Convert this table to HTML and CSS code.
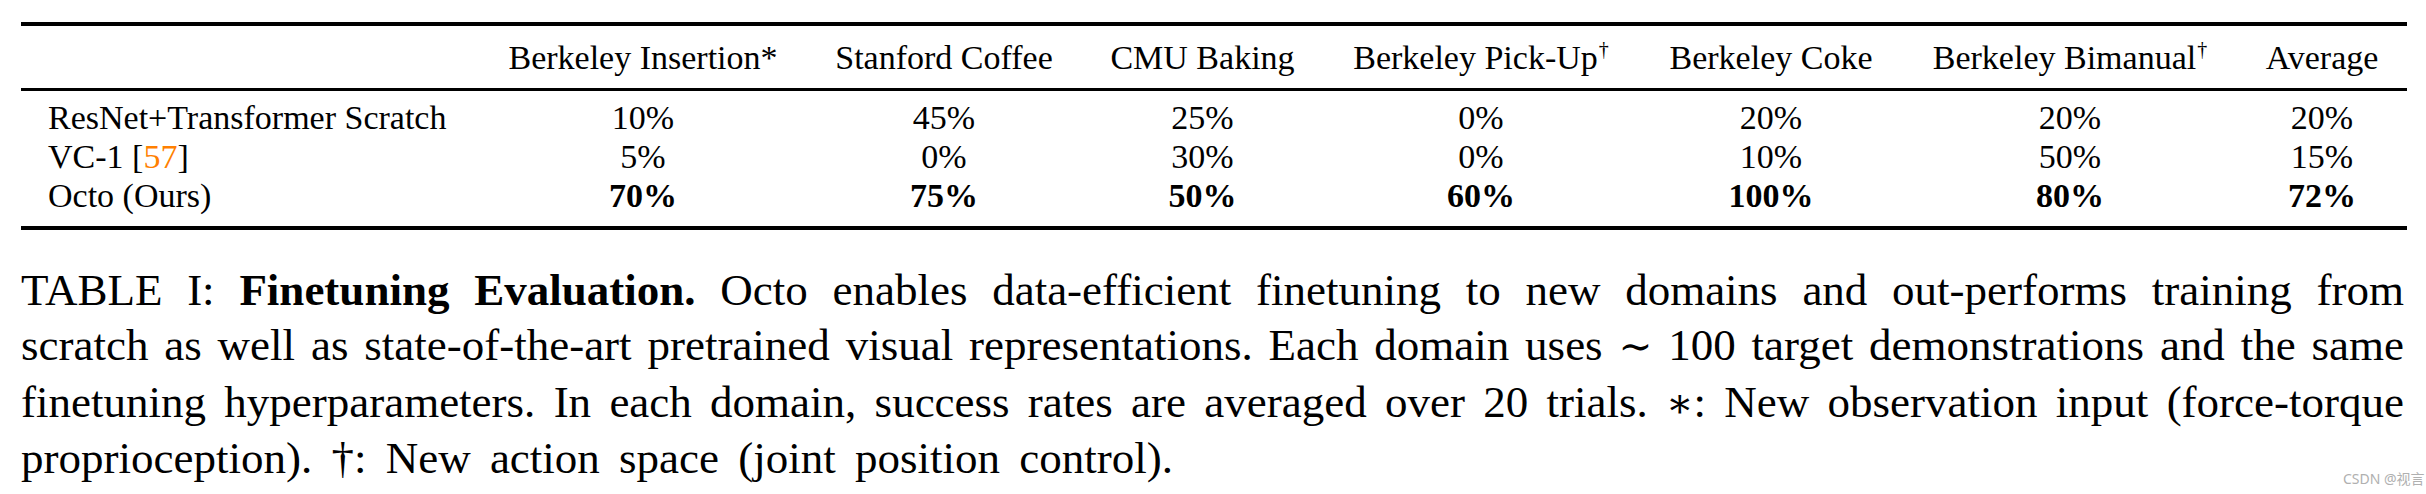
FILE: index.html
```html
<!DOCTYPE html>
<html lang="en">
<head>
<meta charset="utf-8">
<title>TABLE I: Finetuning Evaluation</title>
<link rel="stylesheet" href="styles.css">
</head>
<body>
<div class="page">
  <table class="results">
    <colgroup>
      <col class="c0"><col class="c1"><col class="c2"><col class="c3"><col class="c4"><col class="c5"><col class="c6"><col class="c7">
    </colgroup>
    <thead>
      <tr>
        <th class="label"></th>
        <th>Berkeley Insertion*</th>
        <th>Stanford Coffee</th>
        <th>CMU Baking</th>
        <th>Berkeley Pick-Up<span class="dag">†</span></th>
        <th>Berkeley Coke</th>
        <th>Berkeley Bimanual<span class="dag">†</span></th>
        <th>Average</th>
      </tr>
    </thead>
    <tbody>
      <tr>
        <td class="label">ResNet+Transformer Scratch</td>
        <td>10%</td><td>45%</td><td>25%</td><td>0%</td><td>20%</td><td>20%</td><td>20%</td>
      </tr>
      <tr>
        <td class="label">VC-1 [<span class="cite">57</span>]</td>
        <td>5%</td><td>0%</td><td>30%</td><td>0%</td><td>10%</td><td>50%</td><td>15%</td>
      </tr>
      <tr class="best">
        <td class="label">Octo (Ours)</td>
        <td>70%</td><td>75%</td><td>50%</td><td>60%</td><td>100%</td><td>80%</td><td>72%</td>
      </tr>
    </tbody>
  </table>
  <p class="caption">
    <span class="line">TABLE I: <b>Finetuning Evaluation.</b> Octo enables data-efficient finetuning to new domains and out-performs training from</span>
    <span class="line">scratch as well as state-of-the-art pretrained visual representations. Each domain uses <span class="math">∼</span> 100 target demonstrations and the same</span>
    <span class="line">finetuning hyperparameters. In each domain, success rates are averaged over 20 trials. <span class="math">∗</span>: New observation input (force-torque</span>
    <span class="line last">proprioception). †: New action space (joint position control).</span>
  </p>
  <div class="watermark">CSDN @视言</div>
</div>
</body>
</html>
```
FILE: styles.css
```css
html, body {
  margin: 0;
  padding: 0;
  background: #ffffff;
}

body {
  font-family: "Liberation Serif", "Times New Roman", "DejaVu Serif", serif;
  color: #000000;
}

.page {
  position: relative;
  width: 2426px;
  height: 494px;
  box-sizing: border-box;
  padding: 22px 0 0 21px;
  overflow: hidden;
}

.results {
  border-collapse: separate;
  border-spacing: 0;
  table-layout: fixed;
  width: 2386px;
  font-size: 34px;
  line-height: 39px;
}

.c0 { width: 459px; }
.c1 { width: 326px; }
.c2 { width: 276px; }
.c3 { width: 241px; }
.c4 { width: 316px; }
.c5 { width: 264px; }
.c6 { width: 334px; }
.c7 { width: 170px; }

.results th {
  font-weight: normal;
  text-align: center;
  white-space: nowrap;
  padding: 12px 0 11px 0;
  border-top: 4px solid #000000;
  border-bottom: 3px solid #000000;
}

.results td {
  text-align: center;
  white-space: nowrap;
  padding: 0;
}

.results tbody tr:first-child td {
  padding-top: 7px;
}

.results tbody tr:last-child td {
  padding-bottom: 11px;
  border-bottom: 4px solid #000000;
}

.results .label {
  text-align: left;
  padding-left: 27px;
}

.best td {
  font-weight: bold;
}

.best td.label {
  font-weight: normal;
}

.cite {
  color: #ff8000;
}

.dag {
  font-size: 20px;
  line-height: 0;
  vertical-align: 13px;
  margin-left: 1px;
}

.caption {
  margin: 33px 0 0 0;
  width: 2383px;
  font-size: 45px;
  line-height: 55.4px;
}

.caption .line {
  display: block;
  white-space: nowrap;
  text-align: justify;
  text-align-last: justify;
}

.caption .line.last {
  text-align-last: left;
  word-spacing: 8px;
}

.math {
  font-family: "DejaVu Serif", "Liberation Serif", serif;
  font-size: 0.9em;
}

.watermark {
  position: absolute;
  left: 2343px;
  top: 470px;
  font-family: "Noto Sans", "Noto Sans CJK SC", sans-serif;
  font-size: 14px;
  line-height: 18px;
  color: #b0b0b0;
  white-space: nowrap;
}
```
